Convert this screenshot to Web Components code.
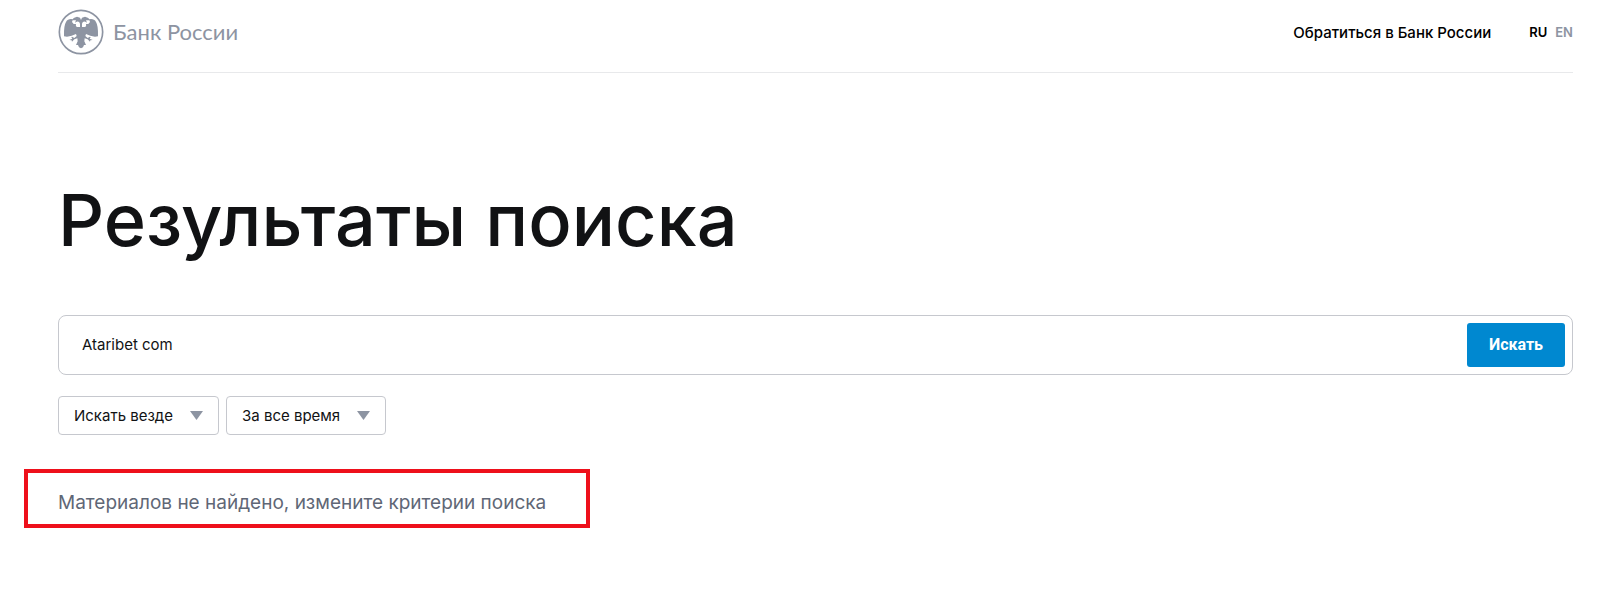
<!DOCTYPE html>
<html lang="ru">
<head>
<meta charset="utf-8">
<meta name="viewport" content="width=device-width, initial-scale=1">
<title>Результаты поиска | Банк России</title>
<style>
  body { margin: 0; background: #fff; color: #111214; font-family: Inter, "Liberation Sans", sans-serif; }
</style>
</head>
<body>
<search-page>
  <site-header slot="header">
    <bank-logo slot="logo" href="#home">Банк России</bank-logo>
    <nav-link slot="actions" href="#reception">Обратиться в Банк России</nav-link>
    <lang-switch slot="actions"></lang-switch>
  </site-header>
  <page-title>Результаты поиска</page-title>
  <search-form value="Ataribet com">Искать</search-form>
  <filter-bar>
    <filter-select label="Область поиска" options="Искать везде"></filter-select>
    <filter-select label="Период" options="За все время"></filter-select>
  </filter-bar>
  <result-notice>Материалов не найдено, измените критерии поиска</result-notice>
</search-page>
<script>
  const define = (name, html, setup) => {
    const template = document.createElement('template');
    template.innerHTML = html;
    customElements.define(name, class extends HTMLElement {
      constructor() {
        super();
        this.attachShadow({ mode: 'open' }).append(template.content.cloneNode(true));
      }
      connectedCallback() { if (setup) setup(this, this.shadowRoot); }
    });
  };

  define('search-page', `
    <style>
      :host { display: block; padding: 0 27px 40px 58px; }
    </style>
    <slot name="header"></slot>
    <main><slot></slot></main>`);

  define('site-header', `
    <style>
      :host { display: block; }
      header { display: flex; align-items: center; justify-content: space-between; padding: 9px 0 17px; border-bottom: 1px solid #e8e9eb; }
      nav { display: flex; align-items: center; gap: 38px; }
    </style>
    <header><slot name="logo"></slot><nav><slot name="actions"></slot></nav></header>`);

  define('bank-logo', `
    <style>
      :host { display: block; }
      a { display: flex; align-items: center; gap: 9px; color: #8d94a2; text-decoration: none; font: 22px/30px Lato, "Open Sans", sans-serif; }
      svg { display: block; width: 46px; height: 46px; }
    </style>
    <a>
      <svg viewBox="23 26 138 138" fill="currentColor" aria-hidden="true">
        <circle cx="92" cy="95" r="65" fill="none" stroke="currentColor" stroke-width="5"/>
        <path d="M89 80V70Q87 62 79 64L74 67L77 60L66 59L70 53L80 49L89 52L92 59L95 52L104 49L114 53L118 59L107 60L110 67L105 64Q97 62 95 70V80H105Q109 75 107 71H114L119 65L116 57Q131 54 137 65Q144 76 143 108L134 109L120 106L107 101L105 107L112 113L119 109L121 111L118 115L127 119L120 120L119 124L112 117L103 114L102 123L107 134L101 134L98 141L92 144L86 141L83 134L77 134L82 123L81 114L72 117L65 124L64 120L57 119L66 115L63 111L65 109L72 113L79 107L77 101L64 106L50 109L41 108Q40 76 47 65Q53 54 68 57L65 65L70 71H77Q75 75 79 80Z"/>
      </svg>
      <span><slot></slot></span>
    </a>`, (el, root) => { root.querySelector('a').href = el.getAttribute('href'); });

  define('nav-link', `
    <style>
      :host { display: block; }
      a { color: #000; text-decoration: none; font: 500 15px/20px Inter, sans-serif; }
    </style>
    <a><slot></slot></a>`, (el, root) => { root.querySelector('a').href = el.getAttribute('href'); });

  define('lang-switch', `
    <style>
      :host { display: flex; gap: 8px; font: 600 13px/20px Inter, sans-serif; }
      a { color: #8d94a2; text-decoration: none; }
      a[aria-current] { color: #000; }
    </style>
    <a href="#ru" aria-current="true">RU</a><a href="#en">EN</a>`);

  define('page-title', `
    <style>
      :host { display: block; padding: 104px 0 52px; }
      h1 { margin: 0; font: 550 72px/86px Inter, sans-serif; color: #111214; }
    </style>
    <h1><slot></slot></h1>`);

  define('search-form', `
    <style>
      :host { display: block; }
      form { display: flex; box-sizing: border-box; padding: 7px; border: 1px solid #c6c8ce; border-radius: 8px; }
      input { flex: 1; min-width: 0; border: 0; outline: 0; padding: 0 16px; background: none; color: #111214; font: 15px/20px Inter, sans-serif; }
      button { border: 0; border-radius: 3px; padding: 12px 22px; background: #0088d0; color: #fff; font: 700 16px/20px Roboto, sans-serif; cursor: pointer; }
    </style>
    <form role="search" onsubmit="return false">
      <input type="text" aria-label="Поиск">
      <button type="submit"><slot></slot></button>
    </form>`, (el, root) => { root.querySelector('input').value = el.getAttribute('value'); });

  define('filter-bar', `
    <style>
      :host { display: flex; flex-wrap: wrap; gap: 7px; padding: 21px 0 34px; }
    </style>
    <slot></slot>`);

  define('filter-select', `
    <style>
      :host { display: block; }
      label { display: grid; align-items: center; }
      select { grid-area: 1 / 1; appearance: none; margin: 0; border: 1px solid #c6c8ce; border-radius: 4px; background: #fff; color: #111214; padding: 8px 44px 8px 15px; font: 15px/21px Inter, sans-serif; }
      svg { grid-area: 1 / 1; justify-self: end; margin-right: 16px; pointer-events: none; }
    </style>
    <label>
      <select></select>
      <svg width="13" height="9" viewBox="0 0 13 9" aria-hidden="true"><path d="M0 0H13L6.5 9Z" fill="#8d94a2"/></svg>
    </label>`, (el, root) => {
      const select = root.querySelector('select');
      select.setAttribute('aria-label', el.getAttribute('label'));
      select.replaceChildren(...el.getAttribute('options').split('|').map(text => new Option(text)));
    });

  define('result-notice', `
    <style>
      :host { display: block; box-sizing: border-box; width: fit-content; margin-left: -34px; padding: 17px 40px 9px 30px; border: 4px solid #ee101b; }
      p { margin: 0; color: #5f6776; font: 19px/25px Inter, sans-serif; }
    </style>
    <p role="status"><slot></slot></p>`);
</script>
</body>
</html>
